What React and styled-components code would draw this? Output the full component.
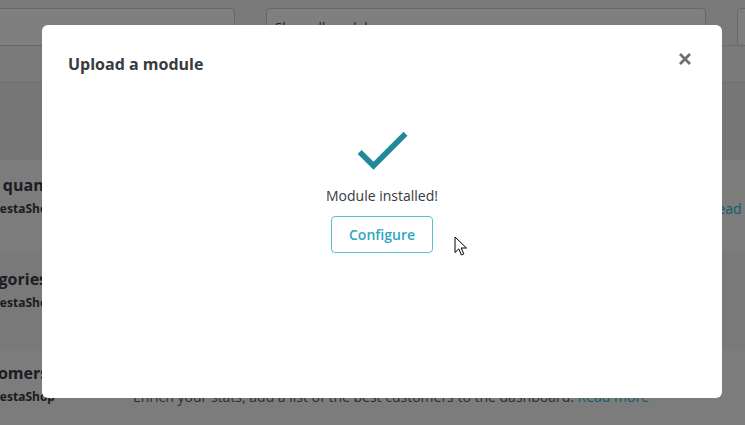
import React from "react";
import styled, { createGlobalStyle } from "styled-components";

const GlobalStyle = createGlobalStyle`
  html, body {
    margin: 0;
    padding: 0;
    width: 745px;
    height: 425px;
    overflow: hidden;
  }
  body {
    font-family: "Open Sans", "Noto Sans", sans-serif;
    background: #ececec;
    color: #363a41;
  }
`;

/* ---------- underlying page (scrolled horizontally) ---------- */
const Page = styled.div`
  width: 745px;
  height: 425px;
  overflow: hidden;
  background: #ececec;
`;

const Scrolled = styled.div`
  width: 1000px;
  margin-left: -100px;
`;

const FilterBar = styled.div`
  display: flex;
  align-items: flex-start;
  gap: 31px;
  height: 46px;
  padding-top: 8px;
  box-sizing: border-box;
  background: #f4f4f4;
  border-bottom: 1px solid #dcdcdc;
`;

const Select = styled.div`
  flex: 0 0 ${(p) => p.$w}px;
  height: 38px;
  box-sizing: border-box;
  background: #fff;
  border: 1px solid #cfcfcf;
  border-radius: 4px;
  display: flex;
  align-items: center;
  justify-content: space-between;
  padding: 0 12px 0 8px;
  font-size: 13px;
  color: #363a41;
`;

const Chevron = () => (
  <svg width="11" height="7" viewBox="0 0 11 7">
    <path d="M1 1l4.5 4.5L10 1" fill="none" stroke="#6c868e" strokeWidth="1.6" />
  </svg>
);

const SubBar = styled.div`
  height: 36px;
  background: #f4f4f4;
  border-bottom: 1px solid #dcdcdc;
`;

const List = styled.div`
  margin-top: 77px;
  background: #f7f7f7;
`;

const Row = styled.div`
  display: grid;
  grid-template-columns: 208px 1fr;
  padding: 14px 0 35px 25px;
  border-bottom: 1px solid ${(p) => (p.$alt ? "#efefef" : "#f0f0f0")};
  background: ${(p) => (p.$alt ? "#f3f3f3" : "#f8f8f8")};
`;

const NameCol = styled.div`
  display: flex;
  flex-direction: column;
  gap: 4px;
  white-space: nowrap;
`;

const ModTitle = styled.div`
  font-size: 16px;
  font-weight: 700;
  line-height: 22px;
  color: #363a41;
`;

const ModAuthor = styled.div`
  font-size: 12px;
  font-weight: 700;
  line-height: 18px;
  color: #363a41;
`;

const Desc = styled.div`
  padding-top: 26px;
  font-size: 14px;
  line-height: 18px;
  color: #5d6266;
  white-space: nowrap;
`;

const ReadMore = styled.span`
  color: #25b9d7;
`;

/* ---------- overlay + modal ---------- */
const Overlay = styled.div`
  position: fixed;
  inset: 0;
  background: rgba(0, 0, 0, 0.5);
  padding: 25px 0 0 42px;
  box-sizing: border-box;
`;

const Modal = styled.div`
  width: 680px;
  height: 373px;
  background: #fff;
  border-radius: 6px;
  box-sizing: border-box;
  display: flex;
  flex-direction: column;
`;

const Header = styled.div`
  display: flex;
  justify-content: space-between;
  align-items: flex-start;
  padding: 28px 30px 0 26px;
`;

const Title = styled.h4`
  margin: 0;
  font-size: 16px;
  font-weight: 700;
  line-height: 22px;
  color: #363a41;
`;

const Close = styled.button`
  border: 0;
  background: none;
  padding: 0;
  margin-top: -1px;
  width: 14px;
  height: 14px;
  display: flex;
  cursor: pointer;
`;

const Body = styled.div`
  display: flex;
  flex-direction: column;
  align-items: center;
  padding-top: 41px;
`;

const Message = styled.p`
  margin: 2px 0 0;
  font-size: 14px;
  line-height: 20px;
  color: #363a41;
`;

const OutlineButton = styled.button`
  margin-top: 10px;
  height: 37px;
  padding: 0 17px;
  background: #fff;
  border: 1px solid #5ebfd2;
  border-radius: 4px;
  font-family: "Open Sans", "Noto Sans", sans-serif;
  font-size: 14px;
  font-weight: 600;
  color: #2ea7c2;
  cursor: pointer;
`;

const Pointer = styled.svg`
  position: fixed;
  left: 454px;
  top: 236px;
`;

const modules = [
  {
    name: "Available quantities",
    desc: "Adds a tab showing the quantity of available products for sales to your Stats dashboard.",
  },
  { name: "Best categories", desc: "Enrich your stats, add a list of the best categories to the dashboard.", alt: true },
  { name: "Best customers", desc: "Enrich your stats, add a list of the best customers to the dashboard." },
];

export default function App() {
  return (
    <>
      <GlobalStyle />
      <Page>
        <Scrolled>
          <FilterBar>
            <Select $w={335}>
              <span />
              <Chevron />
            </Select>
            <Select $w={440}>
              <span>Show all modules</span>
              <Chevron />
            </Select>
            <Select $w={200}>
              <span />
              <Chevron />
            </Select>
          </FilterBar>
          <SubBar />
          <List>
            {modules.map((m) => (
              <Row key={m.name} $alt={m.alt}>
                <NameCol>
                  <ModTitle>{m.name}</ModTitle>
                  <ModAuthor>v2.0.0 - by PrestaShop</ModAuthor>
                </NameCol>
                <Desc>
                  {m.desc} <ReadMore>Read more</ReadMore>
                </Desc>
              </Row>
            ))}
          </List>
        </Scrolled>
      </Page>

      <Overlay>
        <Modal>
          <Header>
            <Title>Upload a module</Title>
            <Close aria-label="Close">
              <svg width="14" height="14" viewBox="0 0 14 14">
                <path d="M2 2l10 10M12 2L2 12" stroke="#6f6f6f" strokeWidth="2.8" strokeLinecap="butt" />
              </svg>
            </Close>
          </Header>
          <Body>
            <svg width="68" height="68" viewBox="0 0 24 24">
              <path fill="#22899b" d="M9 16.17L4.83 12l-1.42 1.41L9 19 21 7l-1.41-1.41z" />
            </svg>
            <Message>Module installed!</Message>
            <OutlineButton>Configure</OutlineButton>
          </Body>
        </Modal>
      </Overlay>

      <Pointer width="13" height="20" viewBox="0 0 13 20">
        <path
          d="M1 1v15.5l3.8-3.6 2.6 6 2.4-1-2.6-5.9h5.3z"
          fill="#fff"
          stroke="#000"
          strokeWidth="1"
          strokeLinejoin="round"
        />
      </Pointer>
    </>
  );
}
